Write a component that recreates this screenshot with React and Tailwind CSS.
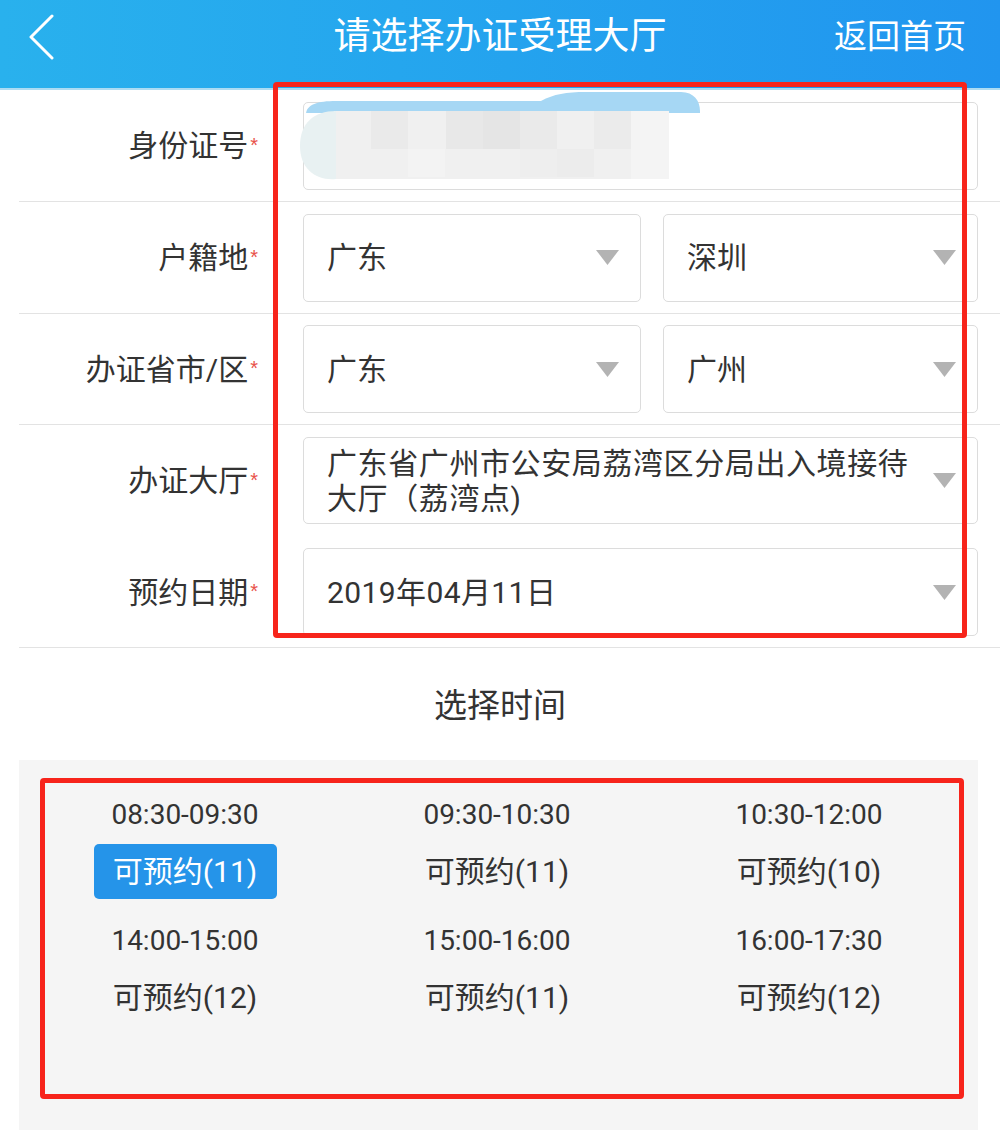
import React from 'react';

const Star = () => (
  <span className="text-[#e8524a] text-[20px] leading-none -translate-y-[1px] ml-[2px]" style={{ fontFamily: '"Liberation Sans", sans-serif' }}>
    *
  </span>
);

const Arrow = () => (
  <svg width="23" height="15" viewBox="0 0 23 15" className="shrink-0">
    <polygon points="0,0 23,0 11.5,15" fill="#b3b3b3" />
  </svg>
);

const Label = ({ children }) => (
  <div className="w-[239px] flex justify-end items-center text-[30px] text-[#333]">
    <span>{children}</span>
    <Star />
  </div>
);

const SelectBox = ({ value, width }) => (
  <div className={`${width} h-[88px] border border-[#dcdcdc] rounded-[5px] flex items-center justify-between pl-[23px] pr-[21px] text-[30px] text-[#333]`}>
    <span>{value}</span>
    <Arrow />
  </div>
);

// blurred-out id number
const Redacted = () => (
  <svg className="absolute left-[-8px] top-[-12px]" width="410" height="90" viewBox="0 0 410 90">
    <path d="M10,24 C10,13 22,10 40,10 L245,10 C258,3 270,1 290,1 L385,1 C398,1 404,10 404,20 L404,22 L10,22 Z" fill="#a6d7f4" />
    <rect x="38" y="20" width="335" height="68" fill="#f0f0f0" />
    <rect x="75" y="20" width="37" height="38" fill="#eaeaea" />
    <rect x="150" y="20" width="37" height="38" fill="#e8e8e8" />
    <rect x="187" y="20" width="37" height="38" fill="#e5e5e5" />
    <rect x="224" y="20" width="37" height="38" fill="#eaeaea" />
    <rect x="298" y="20" width="37" height="38" fill="#ebebeb" />
    <rect x="112" y="58" width="37" height="28" fill="#f3f3f3" />
    <rect x="224" y="58" width="37" height="28" fill="#eeeeee" />
    <rect x="261" y="58" width="37" height="28" fill="#ececec" />
    <rect x="335" y="20" width="38" height="68" fill="#f4f4f4" />
    <path d="M40,20 L40,88 C20,90 4,78 4,55 C4,32 18,20 40,20 Z" fill="#e8f1f2" />
  </svg>
);

const slots = [
  { time: '08:30-09:30', n: 11, active: true },
  { time: '09:30-10:30', n: 11 },
  { time: '10:30-12:00', n: 10 },
  { time: '14:00-15:00', n: 12 },
  { time: '15:00-16:00', n: 11 },
  { time: '16:00-17:30', n: 12 },
];

const App = () => {
  return (
    <div
      className="relative w-[1000px] h-[1139px] bg-white overflow-hidden"
      style={{ fontFamily: 'Roboto, "Noto Sans CJK SC", sans-serif' }}
    >
      {/* header */}
      <div className="h-[88px] bg-gradient-to-r from-[#29b1ed] to-[#2195ef] flex items-center pb-[14px] px-[28px] text-white">
        <div className="w-[200px] flex items-center">
          <svg width="28" height="46" viewBox="0 0 28 46">
            <polyline points="24,2 3,23 24,44" fill="none" stroke="#fff" strokeWidth="3" strokeLinecap="round" strokeLinejoin="round" />
          </svg>
        </div>
        <div className="flex-1 text-center text-[37px] leading-[44px]">请选择办证受理大厅</div>
        <div className="w-[200px] text-right text-[33px] leading-[44px] pr-[6px]">返回首页</div>
      </div>
      <div className="h-[2px] bg-[#acdcf3]" />

      {/* form */}
      <div className="ml-[19px]">
        <div className="h-[112px] border-b border-[#e3e3e3] flex items-center">
          <Label>身份证号</Label>
          <div className="relative ml-[45px] w-[675px] h-[88px] border border-[#dcdcdc] rounded-[5px]">
            <Redacted />
          </div>
        </div>
        <div className="h-[112px] border-b border-[#e3e3e3] flex items-center">
          <Label>户籍地</Label>
          <div className="ml-[45px] flex gap-[22px]">
            <SelectBox value="广东" width="w-[338px]" />
            <SelectBox value="深圳" width="w-[315px]" />
          </div>
        </div>
        <div className="h-[111px] border-b border-[#e3e3e3] flex items-center">
          <Label>办证省市/区</Label>
          <div className="ml-[45px] flex gap-[22px]">
            <SelectBox value="广东" width="w-[338px]" />
            <SelectBox value="广州" width="w-[315px]" />
          </div>
        </div>
        <div className="h-[223px] border-b border-[#e3e3e3] flex flex-col pt-[12px]">
          <div className="flex items-center">
            <Label>办证大厅</Label>
            <div className="ml-[45px] w-[675px] h-[87px] border border-[#dcdcdc] rounded-[5px] flex items-center justify-between pl-[23px] pr-[21px] text-[30px] text-[#333]">
              <span className="w-[600px] leading-[35px] tracking-[0.6px]">广东省广州市公安局荔湾区分局出入境接待大厅（荔湾点)</span>
              <Arrow />
            </div>
          </div>
          <div className="flex items-center mt-[24px]">
            <Label>预约日期</Label>
            <div className="ml-[45px] w-[675px] h-[88px] border border-[#dcdcdc] rounded-[5px] flex items-center justify-between pl-[23px] pr-[21px] text-[30px] text-[#333]">
              <span className="tracking-[0.4px]">2019年04月11日</span>
              <Arrow />
            </div>
          </div>
        </div>
      </div>

      {/* time title */}
      <div className="h-[112px] flex items-center justify-center text-[33px] text-[#333] pt-[3px]">选择时间</div>

      {/* time slots */}
      <div className="ml-[19px] w-[959px] h-[370px] bg-[#f5f5f5] pl-[10px] pr-[13px] pt-[37px]">
        <div className="grid grid-cols-3 gap-y-[24px]">
          {slots.map((s) => (
            <div key={s.time} className="flex flex-col items-center">
              <div className="h-[36px] leading-[36px] text-[28px] text-[#333]">{s.time}</div>
              <div
                className={`mt-[11px] h-[55px] w-[183px] rounded-[5px] flex items-center justify-center text-[30px] ${
                  s.active ? 'bg-[#2594e9] text-white' : 'text-[#333]'
                }`}
              >
                可预约({s.n})
              </div>
            </div>
          ))}
        </div>
      </div>

      {/* annotation boxes */}
      <div className="absolute left-[273px] top-[82px] w-[694px] h-[556px] border-[5px] border-[#f7241b] rounded-[4px]" />
      <div className="absolute left-[40px] top-[778px] w-[924px] h-[321px] border-[5px] border-[#f7241b] rounded-[4px]" />
    </div>
  );
};

export default App;
